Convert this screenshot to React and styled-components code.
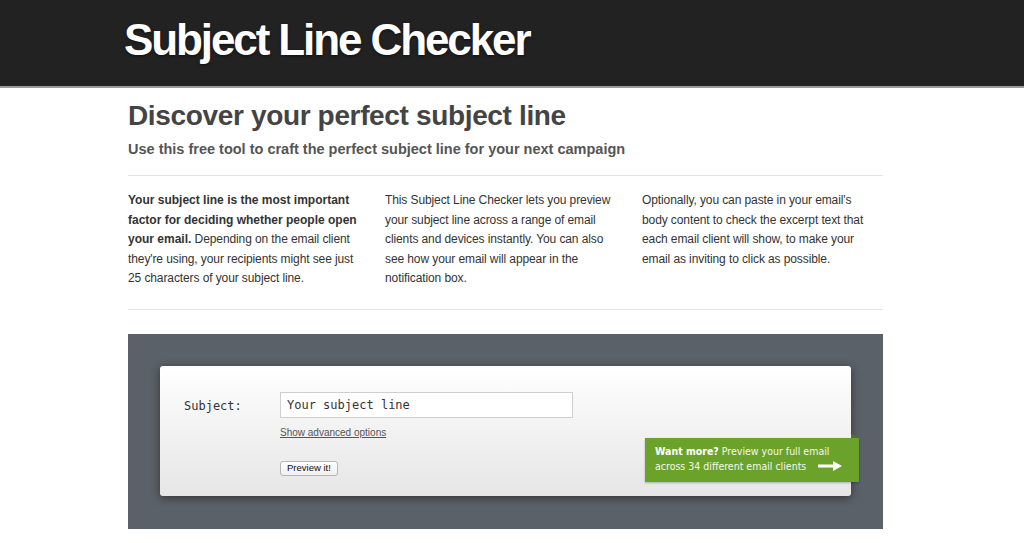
import React from "react";
import styled, { createGlobalStyle } from "styled-components";

const GlobalStyle = createGlobalStyle`
  html, body {
    margin: 0;
    padding: 0;
    background: #ffffff;
    font-family: "Liberation Sans", Arial, sans-serif;
    overflow: hidden;
  }
`;

export default function App() {
  return (
    <>
      <GlobalStyle />
      <Header>
        <HeaderInner>
          <SiteTitle>Subject Line Checker</SiteTitle>
        </HeaderInner>
      </Header>
      <Container>
        <Intro>
          <Heading>Discover your perfect subject line</Heading>
          <Subheading>
            Use this free tool to craft the perfect subject line for your next
            campaign
          </Subheading>
        </Intro>
        <Columns>
          <Column>
            <strong>
              Your subject line is the most important factor for deciding
              whether people open your email.
            </strong>{" "}
            Depending on the email client they're using, your recipients might
            see just 25 characters of your subject line.
          </Column>
          <Column>
            This Subject Line Checker lets you preview your subject line across
            a range of email clients and devices instantly. You can also see how
            your email will appear in the notification box.
          </Column>
          <Column>
            Optionally, you can paste in your email's body content to check the
            excerpt text that each email client will show, to make your email as
            inviting to click as possible.
          </Column>
        </Columns>
        <ToolArea>
          <Panel>
            <FormRow>
              <Label>Subject:</Label>
              <Field>
                <SubjectInput defaultValue="Your subject line" />
                <AdvancedLink href="#">Show advanced options</AdvancedLink>
                <PreviewButton>Preview it!</PreviewButton>
              </Field>
            </FormRow>
            <Promo>
              <PromoText>
                <b>Want more?</b> Preview your full email
                <br />
                across 34 different email clients
                <Arrow viewBox="0 0 24 10" aria-hidden="true">
                  <path d="M0 3.6h15V0l9 5-9 5V6.4H0z" fill="#ffffff" />
                </Arrow>
              </PromoText>
            </Promo>
          </Panel>
        </ToolArea>
      </Container>
    </>
  );
}

const Header = styled.header`
  height: 86px;
  background: #222222;
  border-bottom: 2px solid #9a9a9a;
`;

const HeaderInner = styled.div`
  margin-left: 124px;
`;

const SiteTitle = styled.h1`
  margin: 0;
  padding-top: 13px;
  font-family: "Liberation Sans", Arial, sans-serif;
  font-size: 44px;
  font-weight: 700;
  letter-spacing: -2.1px;
  line-height: 54px;
  color: #ffffff;
  text-shadow: 0 1px 3px rgba(0, 0, 0, 0.6);
`;

const Container = styled.main`
  width: 755px;
  margin-left: 128px;
  padding-bottom: 15px;
`;

const Intro = styled.div`
  padding-top: 11px;
  padding-bottom: 16px;
  border-bottom: 1px solid #e2e2e2;
`;

const Heading = styled.h2`
  margin: 0;
  font-size: 28px;
  font-weight: 700;
  letter-spacing: -0.35px;
  line-height: 34px;
  color: #444444;
`;

const Subheading = styled.p`
  margin: 6px 0 0;
  font-size: 14.5px;
  font-weight: 700;
  line-height: 20px;
  color: #555555;
`;

const Columns = styled.div`
  display: grid;
  grid-template-columns: repeat(3, 237px);
  column-gap: 20px;
  padding: 15px 0 20px;
  border-bottom: 1px solid #e2e2e2;
`;

const Column = styled.p`
  margin: 0;
  font-size: 12px;
  letter-spacing: -0.1px;
  line-height: 19.5px;
  color: #333333;

  strong {
    font-weight: 700;
    letter-spacing: 0;
    color: #333333;
  }
`;

const ToolArea = styled.section`
  margin-top: 24px;
  background: #5b6168;
  padding: 32px 32px 33px;
`;

const Panel = styled.div`
  position: relative;
  height: 130px;
  box-sizing: border-box;
  border-radius: 3px;
  background: linear-gradient(#ffffff 0%, #f3f3f3 45%, #e6e6e6 100%);
  box-shadow: 0 2px 10px rgba(0, 0, 0, 0.45);
  padding: 26px 24px;
`;

const FormRow = styled.div`
  display: flex;
  align-items: flex-start;
`;

const Label = styled.label`
  width: 96px;
  padding-top: 7px;
  font-family: "DejaVu Sans Mono", "Liberation Mono", monospace;
  font-size: 12px;
  color: #333333;
`;

const Field = styled.div`
  display: flex;
  flex-direction: column;
  align-items: flex-start;
`;

const SubjectInput = styled.input`
  width: 293px;
  height: 26px;
  box-sizing: border-box;
  border: 1px solid #cfcfcf;
  background: #ffffff;
  padding: 0 6px;
  font-family: "DejaVu Sans Mono", "Liberation Mono", monospace;
  font-size: 12px;
  color: #333333;
  outline: none;
`;

const AdvancedLink = styled.a`
  margin-top: 9px;
  font-size: 10px;
  color: #555555;
  text-decoration: underline;
`;

const PreviewButton = styled.button`
  margin-top: 23px;
  height: 15px;
  padding: 0 6px;
  border: 1px solid #b5b5b5;
  border-radius: 3px;
  background: linear-gradient(#ffffff, #f0f0f0);
  font-family: "Liberation Sans", Arial, sans-serif;
  font-size: 9.5px;
  line-height: 12px;
  color: #111111;
`;

const Promo = styled.div`
  position: absolute;
  right: -8px;
  top: 72px;
  width: 214px;
  height: 44px;
  box-sizing: border-box;
  background: #6ba32a;
  padding: 6px 10px;
  box-shadow: 0 1px 2px rgba(0, 0, 0, 0.25);

  &::before {
    content: "";
    position: absolute;
    right: 0;
    top: -4px;
    border-left: 8px solid #4c7a18;
    border-top: 4px solid transparent;
  }
`;

const PromoText = styled.p`
  margin: 0;
  font-family: "DejaVu Sans Condensed", "Roboto", sans-serif;
  font-size: 10.5px;
  line-height: 15px;
  color: #f3f8ec;

  b {
    color: #ffffff;
  }
`;

const Arrow = styled.svg`
  width: 24px;
  height: 10px;
  margin-left: 12px;
  vertical-align: -1px;
`;
